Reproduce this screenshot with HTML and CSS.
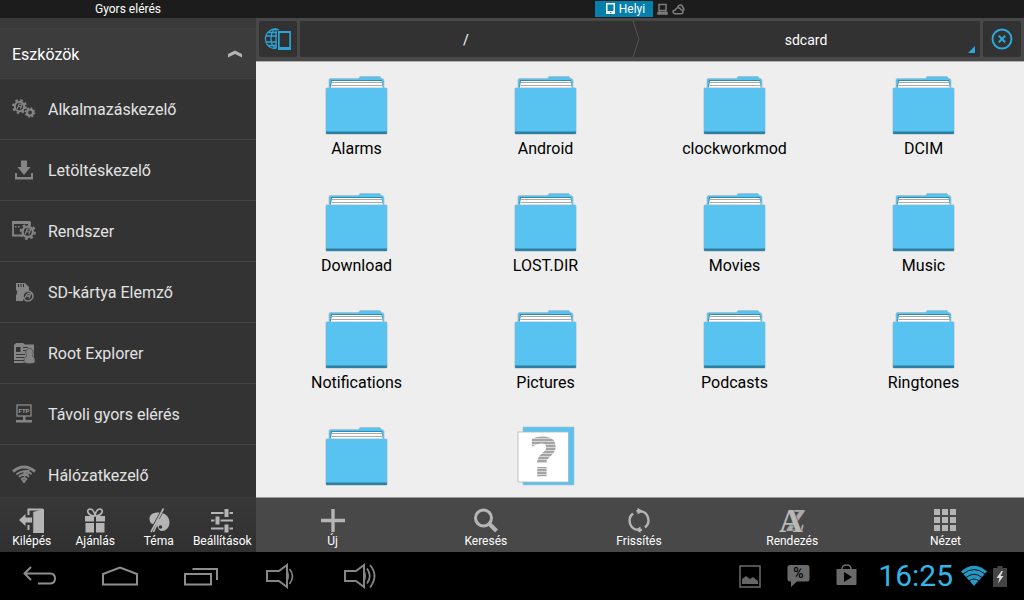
FILE: index.html
```html
<!DOCTYPE html>
<html lang="hu">
<head>
<meta charset="utf-8">
<meta name="viewport" content="width=device-width, initial-scale=1">
<title>sdcard</title>
<link rel="stylesheet" href="styles.css">
</head>
<body>
<svg class="defs" aria-hidden="true">
  <symbol id="folder" viewBox="0 0 63 60">
    <path d="M4 14V5q0-1.500 1.500-1.500H33.500L35 1.500H55l1.500 2q2.500 0 2.500 2V14z" fill="#57c2f0" stroke="#a9b4b9" stroke-width=".6"/>
    <path d="M6 5H57l1 9H5z" fill="#2f8cb3"/>
    <path d="M7 6H56.500L58 14H5.500z" fill="#fff"/>
    <path d="M7 7.500H57M6.500 10.500H57.500" stroke="#aaa" stroke-width="1"/>
    <rect x=".5" y="12.500" width="62" height="47" rx="1.500" fill="#b8bcbe"/>
    <rect x="1" y="13" width="61" height="46" rx="1" fill="#58c2f0"/>
    <path d="M1 56.500H62V58q0 1-1 1H2q-1 0-1-1z" fill="#2c80a2"/>
  </symbol>
  <symbol id="gear" viewBox="0 0 16 16">
    <circle cx="8" cy="8" r="5" fill="none" stroke="currentColor" stroke-width="2.200"/>
    <circle cx="8" cy="8" r="6.800" fill="none" stroke="currentColor" stroke-width="2.200" stroke-dasharray="2.670 2.670"/>
    <path d="M5.500 10.500l2-5h3.500l-2 5M6.500 8h3.500" fill="none" stroke="currentColor" stroke-width="1.200"/>
  </symbol>
</svg>

<div class="app">
  <aside class="side">
    <h1 class="side-title">Gyors elérés</h1>
    <button class="group" type="button" aria-expanded="true">
      <span>Eszközök</span>
      <svg width="16" height="8" viewBox="0 0 16 8"><path d="M1 4L8 .5 15 4V7.500L8 4 1 7.500z" fill="#b4b4b4"/></svg>
    </button>
    <nav class="tools">
      <a class="tool" href="#apps">
        <svg class="tool-icon" viewBox="0 0 24 24"><use href="#gear" x="0" y="2" width="15" height="15"/><circle cx="18" cy="15.500" r="3" fill="none" stroke="currentColor" stroke-width="2.200"/><circle cx="18" cy="15.500" r="4.500" fill="none" stroke="currentColor" stroke-width="1.600" stroke-dasharray="1.770 1.770"/></svg>
        Alkalmazáskezelő</a>
      <a class="tool" href="#downloads">
        <svg class="tool-icon" viewBox="0 0 24 24"><path d="M9 2.500h6v6.500h3.500L12 17 5.500 9H9zM3 15h2v4h14v-4h2v6.500H3z" fill="currentColor"/></svg>
        Letöltéskezelő</a>
      <a class="tool" href="#system">
        <svg class="tool-icon" viewBox="0 0 24 24"><path d="M9 16.500H1V3.500H18V6" fill="none" stroke="currentColor" stroke-width="1.800"/><path d="M.1 2H18V5H.1zM3 7h1.500v1.500H3zM6 7h1.500v1.500H6z" fill="currentColor"/><use href="#gear" x="7.500" y="4.500" width="16.500" height="16.500"/></svg>
        Rendszer</a>
      <a class="tool" href="#sd">
        <svg class="tool-icon" viewBox="0 0 24 24"><path d="M4 3h9l4 4v4q-6 1-6 10H4v-6l1-1v-3L4 10z" fill="currentColor"/><path d="M6.500 4v3M9 4v3M11.500 4v3" stroke="#333"/><circle cx="16" cy="16" r="5" fill="#333" stroke="currentColor" stroke-width="1.500"/><path d="M12.500 18.500l3-5H19l-2 5M14.500 16H18" fill="none" stroke="currentColor" stroke-width="1.300"/></svg>
        SD-kártya Elemző</a>
      <a class="tool" href="#root">
        <svg class="tool-icon" viewBox="0 0 24 24"><path d="M2 4l2-2h7l2 1.500h9V22H2z" fill="currentColor"/><path d="M4 6h4.500v5H4z" fill="#333"/><path d="M11 6.500h5M11 9.500h3M4 13.500h9M4 16.500h8M2 19.500h10" stroke="#383838" stroke-width="1"/><path d="M17.500 7.500c2.300 0 3.700 1.700 3.700 4 0 1.700-.5 2.700-1.200 3.500 2 .5 3 2 3 6.500-3 1.500-8 1.500-11 0 0-4.500 1-6 3-6.500-.7-.8-1.200-1.800-1.200-3.500 0-2.300 1.400-4 3.700-4z" fill="currentColor" stroke="#444" stroke-width=".7"/></svg>
        Root Explorer</a>
      <a class="tool" href="#remote">
        <svg class="tool-icon" viewBox="0 0 24 24"><rect x="5" y="3" width="14" height="11" fill="none" stroke="currentColor" stroke-width="1.400"/><path d="M11 14h2.500v4H20v2.500H4V18h7z" fill="currentColor"/><text x="12" y="11" text-anchor="middle" class="ftp">FTP</text></svg>
        Távoli gyors elérés</a>
      <a class="tool" href="#network">
        <svg class="tool-icon" viewBox="0 0 24 24"><path d="M1 8.500Q12-.5 23 8.500" fill="none" stroke="currentColor" stroke-width="3"/><path d="M4.500 11.500Q8 8 15.500 8L11 11.500M7 14q2-2.500 7-2.500l-2 2M19.500 11.500Q18 9.500 16.800 9.300L15 12l2 2M9 16.500q3-2.300 6 0" fill="none" stroke="currentColor" stroke-width="2"/><path d="M9.500 17.500q2.500-1.500 5 0L12 20.500z" fill="currentColor"/></svg>
        Hálózatkezelő</a>
    </nav>
    <div class="bar side-bar">
      <button class="action" type="button">
        <svg class="action-icon" viewBox="0 0 26 26"><path d="M9.500 8V2.500H24M9.500 18v5" fill="none" stroke="currentColor" stroke-width="2"/><path d="M14 5L25 2v24H14z" fill="currentColor"/><path d="M0 13l6.500-6v3.500H13v5H6.500V19z" fill="currentColor"/><path d="M13.800 5v20" stroke="#444"/></svg>
        Kilépés</button>
      <button class="action" type="button">
        <svg class="action-icon" viewBox="0 0 26 26"><path d="M3 9h9v5.500H3zM14 9h9v5.500h-9zM3.500 16H12v9.500H3.500zM14 16h8.500v9.500H14z" fill="currentColor"/><path d="M13 9Q8 9 6 5.500 5 2.500 8 2q4 0 5 7 1-7 5-7 3 .5 2 3.500Q18 9 13 9z" fill="none" stroke="currentColor" stroke-width="1.700"/></svg>
        Ajánlás</button>
      <button class="action" type="button">
        <svg class="action-icon" viewBox="0 0 26 26"><path d="M12 5.500c7 0 11.500 4 11.500 10 0 5.500-4 8.500-7.500 8.500-4 0-3-4-5.500-5.500-2-1.200-7-1-7-6.500 0-4.500 4-6.500 8.500-6.500z" fill="currentColor"/><circle cx="14.500" cy="20" r="1.800" fill="#383838"/><path d="M17.500 1.500L5 24.500" stroke="#383838" stroke-width="3"/><path d="M17.500 1.500L5 25M13.500 12L7.500 25" stroke="currentColor" stroke-width="1.600"/></svg>
        Téma</button>
      <button class="action" type="button">
        <svg class="action-icon" viewBox="0 0 26 26"><path d="M2 6h22M2 13.500h22M2 21.500h22" stroke="currentColor" stroke-width="2"/><path d="M17.500 1.500v9M8.500 9v9M17.500 17v9" stroke="#353535" stroke-width="6"/><path d="M17.500 2v8M8.500 9.500v8M17.500 17.500v8" stroke="currentColor" stroke-width="4"/></svg>
        Beállítások</button>
    </div>
  </aside>

  <main class="main">
    <div class="tabs">
      <button class="tab active" type="button"><svg width="9" height="12" viewBox="0 0 9 12"><path d="M0 0h9v11H0zM1.500 1.500v6.500h6V1.500zM4 9v1h1.500V9z" fill="#fff" fill-rule="evenodd"/></svg>Helyi</button>
      <button class="tab" type="button" aria-label="Hálózat"><svg width="11" height="12" viewBox="0 0 11 12"><path d="M2 1.500h7v6H2zM1 9.500h9v1.500H1z" fill="none" stroke="#7c7c7c" stroke-width="1.500"/><path d="M2.500 8v2M8.500 8v2" stroke="#7c7c7c"/></svg></button>
      <button class="tab" type="button" aria-label="Felhő"><svg width="13" height="12" viewBox="0 0 13 12"><path d="M3 10.800h6q2-.2 2-2t-2-2Q8 4.500 5.500 4.800 3.800 5.300 3.500 7 1 7.100 1 8.800q0 1.700 2 2zM5.500 4.500Q6.500 1.800 9 2q2 .8 1.800 2.500 1.700 1 .7 2.800" fill="none" stroke="#7c7c7c" stroke-width="1.500"/></svg></button>
    </div>
    <div class="pathbar">
      <button class="square" type="button" aria-label="Tároló">
        <svg width="28" height="24" viewBox="0 0 28 24"><g fill="none" stroke="#2ba3d6" stroke-width="1.300"><path d="M15 3Q10 .6 5.500 4 1 7.500 1.500 12.500 2 18 6.500 20.500q3.500 1.500 6 .5M12 1.500v20M12 1.500Q7 3.500 7 12q0 7 5 9.500M1.500 9H13M2 15h11M3.500 5.500H13M4 18.500h9"/></g><path d="M14 4h13v19H14zM15.700 6v14h9.600V6z" fill="#2ba3d6" fill-rule="evenodd"/></svg>
      </button>
      <div class="path">
        <a class="crumb" href="#root-dir">/</a>
        <a class="crumb current" href="#sdcard">sdcard</a>
        <svg class="chevron" viewBox="0 0 8 37"><path d="M1 0l6 18.500L1 37" fill="none" stroke="#555"/></svg>
      </div>
      <button class="square" type="button" aria-label="Bezárás">
        <svg width="22" height="22" viewBox="0 0 22 22"><circle cx="11" cy="11" r="9.500" fill="none" stroke="#2ba9de" stroke-width="1.900"/><path d="M7.800 7.800l6.400 6.400M14.200 7.800l-6.400 6.400" stroke="#2ba9de" stroke-width="2"/></svg>
      </button>
    </div>
    <div class="files">
      <a class="file" href="#f1"><svg class="file-icon"><use href="#folder"/></svg>Alarms</a>
      <a class="file" href="#f2"><svg class="file-icon"><use href="#folder"/></svg>Android</a>
      <a class="file" href="#f3"><svg class="file-icon"><use href="#folder"/></svg>clockworkmod</a>
      <a class="file" href="#f4"><svg class="file-icon"><use href="#folder"/></svg>DCIM</a>
      <a class="file" href="#f5"><svg class="file-icon"><use href="#folder"/></svg>Download</a>
      <a class="file" href="#f6"><svg class="file-icon"><use href="#folder"/></svg>LOST.DIR</a>
      <a class="file" href="#f7"><svg class="file-icon"><use href="#folder"/></svg>Movies</a>
      <a class="file" href="#f8"><svg class="file-icon"><use href="#folder"/></svg>Music</a>
      <a class="file" href="#f9"><svg class="file-icon"><use href="#folder"/></svg>Notifications</a>
      <a class="file" href="#f10"><svg class="file-icon"><use href="#folder"/></svg>Pictures</a>
      <a class="file" href="#f11"><svg class="file-icon"><use href="#folder"/></svg>Podcasts</a>
      <a class="file" href="#f12"><svg class="file-icon"><use href="#folder"/></svg>Ringtones</a>
      <a class="file" href="#f13" aria-label="Mappa"><svg class="file-icon"><use href="#folder"/></svg></a>
      <a class="file" href="#f14" aria-label="Fájl"><svg class="file-icon" viewBox="0 0 63 60">
        <rect x="9" y="1" width="51" height="58" fill="#58c2f0" stroke="#b4bcc0" stroke-width=".6"/>
        <rect x="4" y="6" width="50.500" height="50" fill="#fff" stroke="#b0b4b6" stroke-width=".8"/>
        <text x="29.500" y="50" text-anchor="middle" class="unknown">?</text>
        <path d="M14 12.500h31M14 15.500h31M14 18.500h31M14 21.500h31M14 24.500h31M14 27.500h31M14 30.500h31M14 33.500h31M14 36.500h31M14 39.500h31M14 42.500h31M14 45.500h31M14 48.500h31" stroke="#fff" stroke-opacity=".55"/></svg></a>
    </div>
    <div class="bar main-bar">
      <button class="action" type="button">
        <svg class="action-icon" viewBox="0 0 26 26"><path d="M13 2v23M1 13.500h24" stroke="currentColor" stroke-width="3.400"/></svg>
        Új</button>
      <button class="action" type="button">
        <svg class="action-icon" viewBox="0 0 26 26"><circle cx="10.500" cy="11" r="8" fill="none" stroke="currentColor" stroke-width="3"/><path d="M16.500 17l7 7" stroke="currentColor" stroke-width="4"/></svg>
        Keresés</button>
      <button class="action" type="button">
        <svg class="action-icon" viewBox="0 0 26 26"><path d="M11 22.800A9.300 9.300 0 0 1 7 6.500M15 4.200a9.300 9.300 0 0 1 4 16.300M10.500 4.200A9.300 9.300 0 0 1 14 4M12 23a9.300 9.300 0 0 0 4-.4" fill="none" stroke="currentColor" stroke-width="2.400"/><path d="M11.500 .8l6 3.600-6 2.800zM14.500 19.600v6.400L9.500 22.600z" fill="currentColor"/></svg>
        Frissítés</button>
      <button class="action" type="button">
        <svg class="action-icon" viewBox="0 0 26 26"><text x="17" y="24" text-anchor="middle" class="sort-z">Z</text><text x="12" y="25" text-anchor="middle" class="sort-a">A</text></svg>
        Rendezés</button>
      <button class="action" type="button">
        <svg class="action-icon" viewBox="0 0 26 26"><path d="M2 2h6v6H2zM10 2h6v6h-6zM18 2h6v6h-6zM2 10h6v6H2zM10 10h6v6h-6zM18 10h6v6h-6zM2 18h6v6H2zM10 18h6v6h-6zM18 18h6v6h-6z" fill="currentColor"/></svg>
        Nézet</button>
    </div>
  </main>
</div>

<footer class="system">
  <div class="keys">
    <button class="key" type="button" aria-label="Vissza"><svg width="34" height="20" viewBox="0 0 34 20"><path d="M8 1L1.500 7.500 8 14M1.500 7.500H27q5 0 5 5t-5 5H15" fill="none" stroke="#8c8f8d" stroke-width="2"/></svg></button>
    <button class="key" type="button" aria-label="Kezdőlap"><svg width="38" height="20" viewBox="0 0 38 20"><path d="M2 18.500V8L19 1.500 36 8v10.500z" fill="none" stroke="#8c8f8d" stroke-width="2"/></svg></button>
    <button class="key" type="button" aria-label="Legutóbbi"><svg width="36" height="20" viewBox="0 0 36 20"><path d="M3 8h26v10.500H3zM10.500 3H35v11" fill="none" stroke="#8c8f8d" stroke-width="2"/></svg></button>
    <button class="key" type="button" aria-label="Halkítás"><svg width="30" height="28" viewBox="0 0 30 28"><path d="M2 9v10h12l8 6V3l-8 6z" fill="none" stroke="#868686" stroke-width="2"/><path d="M22.500 8q3 6 0 12z" fill="#868686"/><path d="M24.500 7q6 7 0 15" fill="none" stroke="#868686" stroke-width="1.600"/></svg></button>
    <button class="key" type="button" aria-label="Hangosítás"><svg width="34" height="28" viewBox="0 0 34 28"><path d="M2 9v10h11l8 6V3l-8 6z" fill="none" stroke="#868686" stroke-width="2"/><path d="M21.500 8q3 6 0 12z" fill="#868686"/><path d="M24 6.500q5.500 7.500 0 15M27 3q9 10.500 0 22.500" fill="none" stroke="#868686" stroke-width="1.800"/></svg></button>
  </div>
  <div class="notices">
    <svg width="22" height="24" viewBox="0 0 22 24"><rect x="1" y="2" width="20" height="21" fill="none" stroke="#656565" stroke-width="1.600"/><path d="M3 20v-5l4-3 4 3 3-2 5 4v3z" fill="#656565"/></svg>
    <svg width="23" height="24" viewBox="0 0 23 24"><path d="M3 1h17q2.500 0 2.500 2.500V15q0 2.500-2.500 2.500H10L4 23v-5.500H3Q.5 17.500.5 15V3.500Q.5 1 3 1z" fill="#6a6a6a"/><text x="11.500" y="14" text-anchor="middle" class="percent">%</text></svg>
    <svg width="21" height="24" viewBox="0 0 21 24"><path d="M.5 5h20v15q0 1-1 1h-18q-1 0-1-1zM8 8v10l8-5z" fill="#6a6a6a" fill-rule="evenodd"/><path d="M6 5q0-4 4.500-4T15 5" fill="none" stroke="#6a6a6a" stroke-width="1.500"/></svg>
  </div>
  <time class="clock">16:25</time>
  <svg class="wifi" width="26" height="22" viewBox="0 0 26 22"><path d="M0 6.500Q13-5 26 6.500L13 21z" fill="#2696c2"/><path d="M2 9Q13 0 24 9M5 12.500q8-6.500 16 0M8 16q5-4 10 0" fill="none" stroke="#04141a" stroke-width="1"/></svg>
  <svg class="battery" width="14" height="21" viewBox="0 0 14 21"><path d="M4.500 0h5v2H14v19H0V2h4.500z" fill="#444"/><path d="M8.500 5l-5 7h3L5 17.500l5.500-7.500h-3L10 5z" fill="#ddd"/></svg>
</footer>
</body>
</html>
```
FILE: styles.css
```css
* { box-sizing: border-box; }
body {
  margin: 0;
  height: 100vh;
  display: flex;
  flex-direction: column;
  background: #000;
  color: #fff;
  font-family: Roboto, "Noto Sans", sans-serif;
  font-size: 16px;
}
button { border: 0; padding: 0; margin: 0; background: none; color: inherit; font: inherit; }
a { color: inherit; text-decoration: none; }
svg { display: block; flex: none; }
.defs { position: absolute; width: 0; height: 0; }

.app { flex: 1; min-height: 0; display: grid; grid-template-columns: 1fr 3fr; }

.side { display: flex; flex-direction: column; min-width: 0; min-height: 0; background: #333; }
.side-title {
  margin: 0;
  height: 18px;
  background: #1c1c1c;
  font-size: 12px;
  font-weight: 400;
  line-height: 18px;
  text-align: center;
}
.group {
  display: flex;
  align-items: center;
  justify-content: space-between;
  height: 61px;
  padding: 12px 13px 0 12px;
  background: linear-gradient(#3a3a3a 10px, #404040 10px, #404040 12px, #3c3c3c 12px);
  border-bottom: 1px solid #404040;
}
.tools { flex: 1; min-height: 0; overflow: hidden; }
.tool {
  display: flex;
  align-items: center;
  gap: 12px;
  height: 61px;
  padding-left: 12px;
  border-bottom: 1px solid #444;
  color: #e2e2e2;
}
.tool-icon { width: 24px; height: 24px; color: #858585; }
.ftp { font: 700 6px Roboto, sans-serif; fill: #9a9a9a; }

.bar { display: flex; height: 55px; padding-right: 2px; font-size: 12px; }
.side-bar { border-top: 1px solid #3a3a3a; background: linear-gradient(#383838, #303030); }
.main-bar { border-top: 1px solid #999; background: #484848; }
.action {
  flex: 1 1 0;
  min-width: 0;
  display: flex;
  flex-direction: column;
  align-items: center;
  justify-content: flex-end;
  padding-bottom: 4px;
  line-height: 14px;
  white-space: nowrap;
}
.action-icon { width: 26px; height: 26px; margin-bottom: 1px; overflow: visible; color: #b5b5b5; }
.sort-a { font: 700 33px "Liberation Serif", serif; fill: #b8b8b8; stroke: #484848; stroke-width: 1px; paint-order: stroke; }
.sort-z { font: italic 700 31px "Liberation Serif", serif; fill: #aaa; }

.main { display: flex; flex-direction: column; min-width: 0; min-height: 0; }
.tabs {
  display: flex;
  justify-content: center;
  gap: 4px;
  height: 18px;
  padding: 1px 0;
  background: #1c1c1c;
}
.tab { display: flex; align-items: center; }
.tab.active { gap: 4px; padding: 0 8px 0 11px; background: #0580ad; font-size: 12px; }
.pathbar {
  display: flex;
  gap: 3px;
  height: 44px;
  padding: 3px 3px 4px;
  background: #484848;
  border-bottom: 1px solid #b0b0b0;
}
.square {
  display: flex;
  align-items: center;
  justify-content: center;
  width: 38px;
  background: #323232;
  border-radius: 2px;
}
.path {
  position: relative;
  flex: 1;
  display: grid;
  grid-template-columns: 1fr 8px 1fr;
  padding-right: 8px;
  background: #323232;
  border-radius: 2px;
  font-size: 14px;
}
.crumb { grid-row: 1; grid-column: 1; display: flex; align-items: center; justify-content: center; padding-top: 2px; }
.current { grid-column: 3; }
.path::after {
  content: "";
  position: absolute;
  right: 5px;
  bottom: 4px;
  border-left: 7px solid transparent;
  border-bottom: 7px solid #2ba9de;
}
.chevron { grid-row: 1; grid-column: 2; width: 8px; height: 100%; }

.files {
  flex: 1;
  min-height: 0;
  overflow: hidden;
  display: grid;
  grid-template-columns: repeat(4, 1fr);
  grid-auto-rows: 117px;
  padding: 13px 6px 0;
  background: #eee;
  color: #000;
}
.file { display: flex; flex-direction: column; align-items: center; gap: 4px; line-height: 20px; }
.file-icon { width: 63px; height: 60px; overflow: visible; }
.unknown { font: 700 53px "DejaVu Sans", sans-serif; fill: #a4a4a4; }

.system { display: flex; align-items: center; height: 48px; padding-right: 17px; background: #000; }
.keys { flex: 1; display: flex; }
.key { display: flex; align-items: center; justify-content: center; width: 80px; height: 48px; }
.notices { display: flex; gap: 26px; margin-right: 21px; }
.percent { font: 500 14px Roboto, sans-serif; fill: #000; }
.clock { color: #33b5e5; font-size: 30px; line-height: 48px; }
.wifi { margin: 0 6px 0 8px; }
```
